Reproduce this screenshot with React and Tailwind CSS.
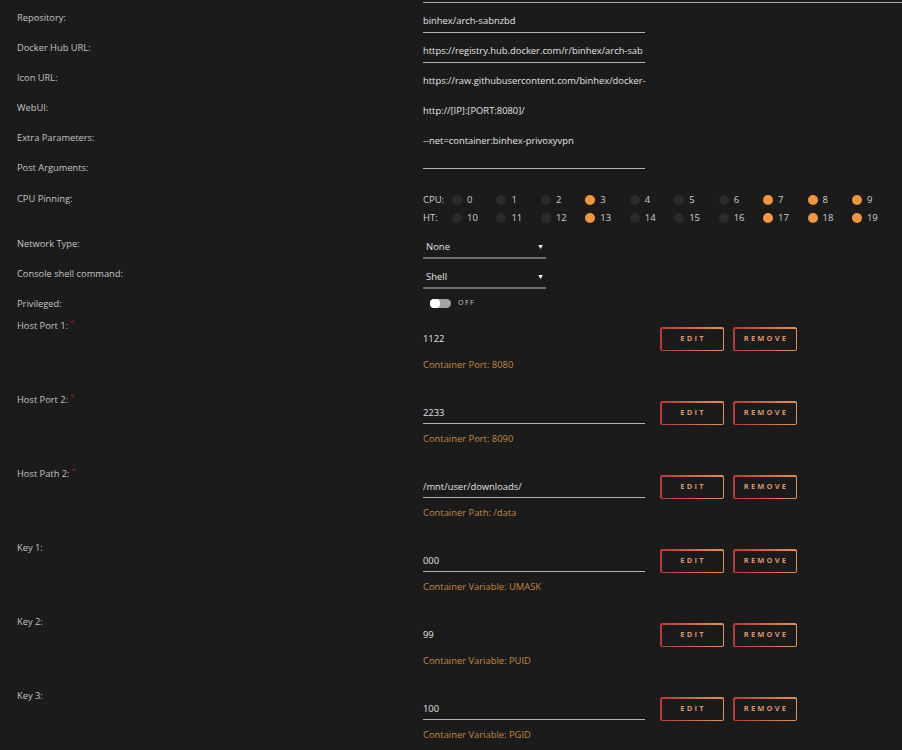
const fields = [
  { label: 'Repository:', value: 'binhex/arch-sabnzbd', line: true },
  { label: 'Docker Hub URL:', value: 'https://registry.hub.docker.com/r/binhex/arch-sab', line: true },
  { label: 'Icon URL:', value: 'https://raw.githubusercontent.com/binhex/docker-' },
  { label: 'WebUI:', value: 'http://[IP]:[PORT:8080]/' },
  { label: 'Extra Parameters:', value: '--net=container:binhex-privoxyvpn' },
  { label: 'Post Arguments:', value: '', line: true },
]

const pinned = [3, 7, 8, 9]

const configs = [
  { label: 'Host Port 1:', required: true, value: '1122', note: 'Container Port: 8080' },
  { label: 'Host Port 2:', required: true, value: '2233', note: 'Container Port: 8090', line: true },
  { label: 'Host Path 2:', required: true, value: '/mnt/user/downloads/', note: 'Container Path: /data', line: true },
  { label: 'Key 1:', value: '000', note: 'Container Variable: UMASK', line: true },
  { label: 'Key 2:', value: '99', note: 'Container Variable: PUID' },
  { label: 'Key 3:', value: '100', note: 'Container Variable: PGID', line: true },
]

function Label({ children, required }) {
  return (
    <div className="w-[423px] shrink-0 pl-[17px] text-[9.3px] leading-[14px] text-[#c4c4c4]">
      {children}
      {required && <sup className="ml-[2px] text-[8px] text-[#9b1c1c]">*</sup>}
    </div>
  )
}

function GradientButton({ children }) {
  return (
    <div className="h-[24px] w-[64px] rounded-[2px] bg-linear-to-r from-[#b8373a] to-[#e2914f] p-[1.5px]">
      <div className="flex h-full w-full items-center justify-center rounded-[1px] bg-[#1b1b1b] pl-[2px] text-[7.5px] font-bold tracking-[2.2px] text-[#d9946a]">
        {children}
      </div>
    </div>
  )
}

function Select({ value }) {
  return (
    <div className="flex w-[123px] items-center justify-between border-b-2 border-[#6e6e6e] pb-[3px] pl-[3px] pr-[2px] pt-[11px] leading-[14px]">
      <span className="text-[9.5px] text-[#e0e0e0]">{value}</span>
      <span className="text-[7px] text-white">▼</span>
    </div>
  )
}

function CpuRow({ name, offset }) {
  return (
    <div className="flex h-[18px] items-center text-[9.5px] text-[#d0d0d0]">
      <span className="w-[29px]">{name}</span>
      {Array.from({ length: 10 }, (_, i) => (
        <div key={i} className="flex w-[44.45px] items-center">
          <span
            className={
              pinned.includes(i)
                ? 'h-[10px] w-[10px] rounded-full bg-[#f3953a]'
                : 'h-[10px] w-[10px] rounded-full bg-[#2b2b2b]'
            }
          />
          <span className="ml-[5px]">{i + offset}</span>
        </div>
      ))}
    </div>
  )
}

export default function App() {
  return (
    <div
      className="h-[750px] w-[902px] overflow-hidden bg-[#1b1b1b]"
      style={{ fontFamily: '"Open Sans", "Liberation Sans", sans-serif' }}
    >
      <div className="mt-[2px] ml-[423px] h-px bg-[#a8a8a8]" />

      {fields.map((f) => (
        <div key={f.label} className="flex h-[30px] items-start">
          <div className="pt-[8px]">
            <Label>{f.label}</Label>
          </div>
          <div
            className={
              f.line
                ? 'w-[222px] whitespace-nowrap border-b border-[#b4b4b4] pb-[4px] pt-[11px] text-[9.4px] leading-[14px] text-[#e2e2e2]'
                : 'w-[222px] whitespace-nowrap border-b border-transparent pb-[4px] pt-[11px] text-[9.4px] leading-[14px] text-[#e2e2e2]'
            }
          >
            {f.value}
          </div>
        </div>
      ))}

      <div className="flex h-[46px] items-start">
        <div className="pt-[9px]">
          <Label>CPU Pinning:</Label>
        </div>
        <div className="pt-[8px]">
          <CpuRow name="CPU:" offset={0} />
          <CpuRow name="HT:" offset={10} />
        </div>
      </div>

      <div className="flex h-[30px] items-start">
        <div className="pt-[8px]">
          <Label>Network Type:</Label>
        </div>
        <Select value="None" />
      </div>

      <div className="flex h-[30px] items-start">
        <div className="pt-[8px]">
          <Label>Console shell command:</Label>
        </div>
        <Select value="Shell" />
      </div>

      <div className="flex h-[30px] items-start">
        <div className="pt-[8px]">
          <Label>Privileged:</Label>
        </div>
        <div className="flex items-center pl-[7px] pt-[9px]">
          <div className="flex h-[9px] w-[21px] items-center rounded-[5px] bg-[#a4a4a4]">
            <div className="h-[9px] w-[10px] rounded-[4px] bg-white" />
          </div>
          <span className="ml-[7px] text-[7px] tracking-[1.5px] text-[#cfcfcf]">OFF</span>
        </div>
      </div>

      {configs.map((c) => (
        <div key={c.label} className="flex h-[74px] items-start">
          <Label required={c.required}>{c.label}</Label>
          <div className="pt-[8px]">
            <div className="flex items-start">
              <div
                className={
                  c.line
                    ? 'w-[222px] border-b border-[#b4b4b4] pb-[3px] pt-[5px] text-[9.4px] leading-[14px] text-[#e2e2e2]'
                    : 'w-[222px] border-b border-transparent pb-[3px] pt-[5px] text-[9.4px] leading-[14px] text-[#e2e2e2]'
                }
              >
                {c.value}
              </div>
              <div className="ml-[15px] flex gap-[9px]">
                <GradientButton>EDIT</GradientButton>
                <GradientButton>REMOVE</GradientButton>
              </div>
            </div>
            <div className="mt-[7px] text-[9.4px] leading-[14px] text-[#c4873f]">{c.note}</div>
          </div>
        </div>
      ))}
    </div>
  )
}
